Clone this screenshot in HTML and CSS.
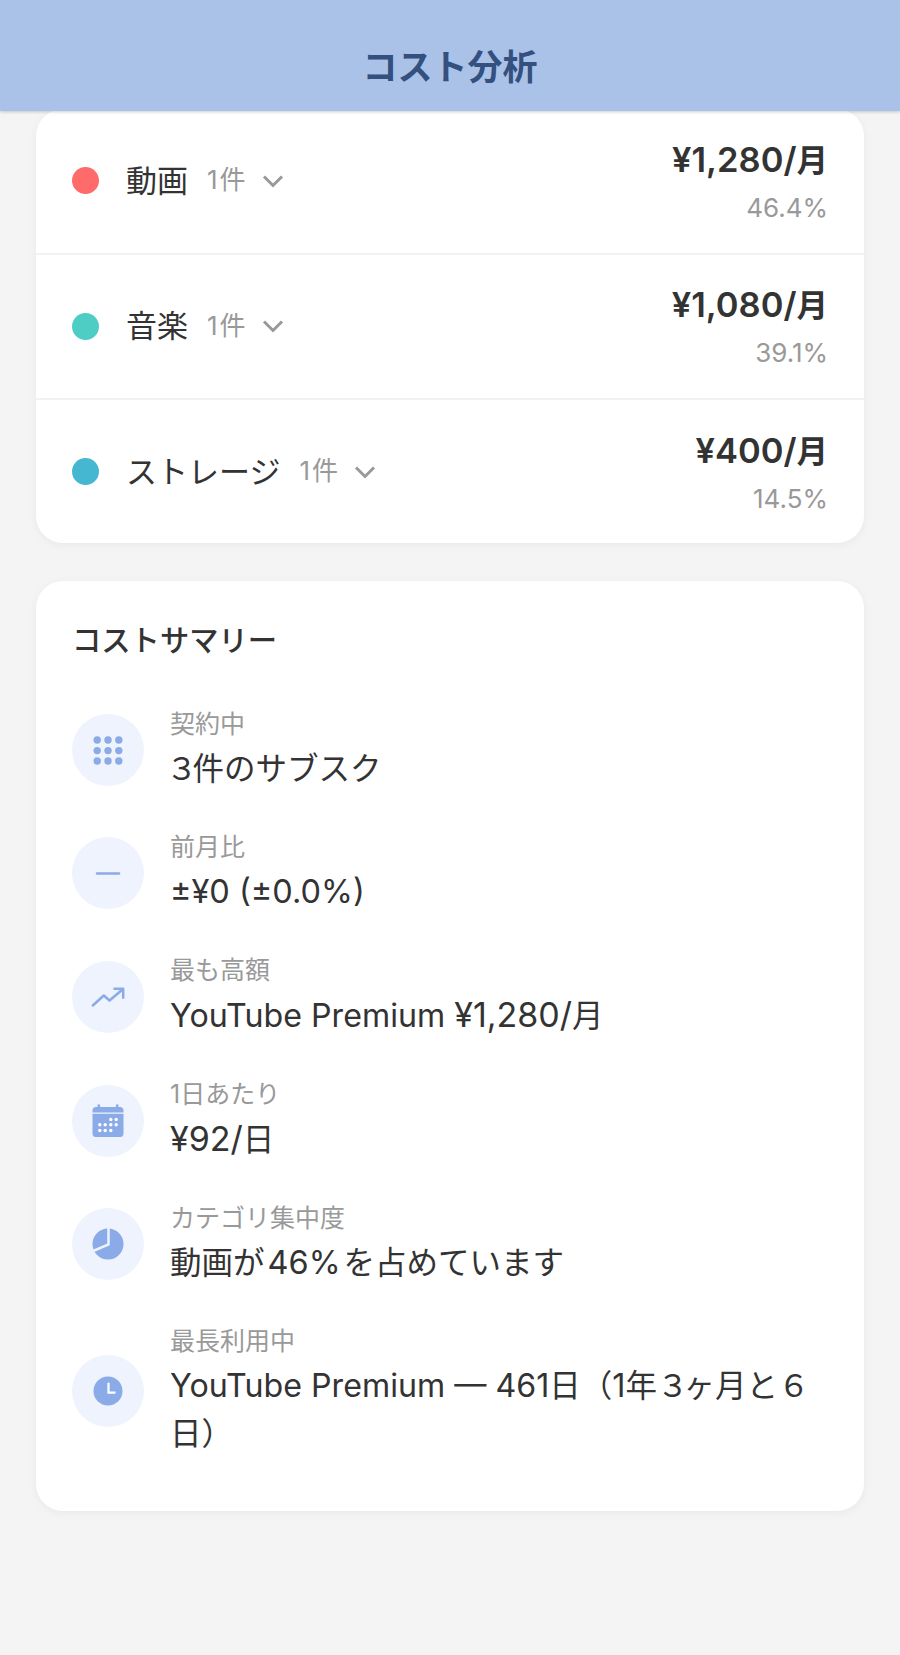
FILE: index.html
```html
<!DOCTYPE html>
<html lang="ja">
<head>
    <meta charset="UTF-8">
    <meta name="viewport" content="width=device-width, initial-scale=1.0">
    <title>コスト分析</title>
    <link rel="stylesheet" href="styles.css">
</head>
<body>
    <header class="app-header">
        <h1>コスト分析</h1>
    </header>

    <main class="content">
        <section class="card category-card">
            <div class="category-row">
                <span class="dot dot-video"></span>
                <span class="category-name">動画</span>
                <span class="category-count">1件</span>
                <svg class="chevron" viewBox="0 0 24 14"><path d="M3 2.5 12 11.5 21 2.5"/></svg>
                <div class="category-cost">
                    <div class="price"><span class="latin">¥1,280/</span>月</div>
                    <div class="percent">46.4%</div>
                </div>
            </div>
            <div class="category-row">
                <span class="dot dot-music"></span>
                <span class="category-name">音楽</span>
                <span class="category-count">1件</span>
                <svg class="chevron" viewBox="0 0 24 14"><path d="M3 2.5 12 11.5 21 2.5"/></svg>
                <div class="category-cost">
                    <div class="price"><span class="latin">¥1,080/</span>月</div>
                    <div class="percent">39.1%</div>
                </div>
            </div>
            <div class="category-row">
                <span class="dot dot-storage"></span>
                <span class="category-name">ストレージ</span>
                <span class="category-count">1件</span>
                <svg class="chevron" viewBox="0 0 24 14"><path d="M3 2.5 12 11.5 21 2.5"/></svg>
                <div class="category-cost">
                    <div class="price"><span class="latin">¥400/</span>月</div>
                    <div class="percent">14.5%</div>
                </div>
            </div>
        </section>

        <section class="card summary-card">
            <h2>コストサマリー</h2>

            <div class="summary-row">
                <div class="summary-icon">
                    <svg viewBox="0 0 36 36" class="icon-fill">
                        <circle cx="7.2" cy="8" r="3.7"/><circle cx="18" cy="8" r="3.7"/><circle cx="28.8" cy="8" r="3.7"/>
                        <circle cx="7.2" cy="18.6" r="3.7"/><circle cx="18" cy="18.6" r="3.7"/><circle cx="28.8" cy="18.6" r="3.7"/>
                        <circle cx="7.2" cy="29" r="3.7"/><circle cx="18" cy="29" r="3.7"/><circle cx="28.8" cy="29" r="3.7"/>
                    </svg>
                </div>
                <div class="summary-text">
                    <div class="summary-label">契約中</div>
                    <div class="summary-value"><span class="lead-digit">３</span>件のサブスク</div>
                </div>
            </div>

            <div class="summary-row">
                <div class="summary-icon">
                    <svg viewBox="0 0 36 36" class="icon-stroke"><path d="M7 18.5H29"/></svg>
                </div>
                <div class="summary-text">
                    <div class="summary-label">前月比</div>
                    <div class="summary-value"><span class="figure">±¥0 (±0.0%)</span></div>
                </div>
            </div>

            <div class="summary-row">
                <div class="summary-icon">
                    <svg viewBox="0 0 36 36" class="icon-stroke"><path d="M2.8 26.5 13.8 16.5 19.5 21.5 32.2 10.8"/><path d="M24.5 9.8H33.2V18.8"/></svg>
                </div>
                <div class="summary-text">
                    <div class="summary-label">最も高額</div>
                    <div class="summary-value"><span class="latin">YouTube Premium </span><span class="figure-wide">¥1,280/</span>月</div>
                </div>
            </div>

            <div class="summary-row">
                <div class="summary-icon">
                    <svg viewBox="0 0 36 36" class="icon-fill">
                        <path d="M7.5 4V2.5a1.2 1.2 0 0 1 2.6 0V4h15.8V2.5a1.2 1.2 0 0 1 2.6 0V4H30a3.5 3.5 0 0 1 3.5 3.5V9.6H2.5V7.5A3.5 3.5 0 0 1 6 4Z"/>
                        <path d="M2.5 10.8h31V30.5a3.5 3.5 0 0 1-3.5 3.5H6a3.5 3.5 0 0 1-3.5-3.5Z"/>
                        <g class="cal-dots">
                            <circle cx="20.8" cy="16.5" r="1.7"/><circle cx="26.2" cy="16.5" r="1.7"/>
                            <circle cx="9.8" cy="21.8" r="1.7"/><circle cx="15.2" cy="21.8" r="1.7"/><circle cx="20.8" cy="21.8" r="1.7"/><circle cx="26.2" cy="21.8" r="1.7"/>
                            <circle cx="9.8" cy="27.5" r="1.7"/><circle cx="15.2" cy="27.5" r="1.7"/><circle cx="20.8" cy="27.5" r="1.7"/>
                        </g>
                    </svg>
                </div>
                <div class="summary-text">
                    <div class="summary-label">1日あたり</div>
                    <div class="summary-value"><span class="figure-wide">¥92/</span>日</div>
                </div>
            </div>

            <div class="summary-row">
                <div class="summary-icon">
                    <svg viewBox="0 0 36 36" class="icon-fill">
                        <circle cx="18" cy="18" r="15.5"/>
                        <path class="pie-cut" d="M18.5 0V18.5L2 25.5"/>
                    </svg>
                </div>
                <div class="summary-text">
                    <div class="summary-label">カテゴリ集中度</div>
                    <div class="summary-value">動画が<span class="figure spaced">46%</span>を占めています</div>
                </div>
            </div>

            <div class="summary-row">
                <div class="summary-icon">
                    <svg viewBox="0 0 36 36" class="icon-fill">
                        <circle cx="18" cy="18" r="14.5"/>
                        <path class="clock-hands" d="M18.5 9.7V19.7H25.5"/>
                    </svg>
                </div>
                <div class="summary-text">
                    <div class="summary-label">最長利用中</div>
                    <div class="summary-value"><span class="latin">YouTube Premium — 461</span>日（<span class="figure">1</span>年<span class="digit-tight">３</span>ヶ月と６日）</div>
                </div>
            </div>
        </section>
    </main>
</body>
</html>
```

FILE: styles.css
```css
* {
    box-sizing: border-box;
}

body {
    margin: 0;
    min-height: 1655px;
    background: #f4f4f4;
    color: #333;
    font-family: "Inter", "Noto Sans CJK JP", sans-serif;
}

.app-header {
    position: relative;
    z-index: 2;
    height: 111px;
    display: flex;
    align-items: flex-end;
    justify-content: center;
    padding-bottom: 22px;
    background: #aac2e8;
    box-shadow: 0 1px 3px rgba(0, 0, 0, 0.2);
}

.app-header h1 {
    margin: 0;
    font-size: 35px;
    line-height: 44px;
    font-weight: 700;
    color: #34507f;
}

.content {
    margin-top: -2px;
    padding: 0 36px;
}

.card {
    background: #fff;
    border-radius: 27px;
    box-shadow: 0 2px 8px rgba(0, 0, 0, 0.05);
}

.category-card {
    margin-bottom: 37.5px;
}

.category-row {
    height: 145.5px;
    display: flex;
    align-items: center;
    padding: 0 36px;
    border-bottom: 2px solid #f2f2f2;
}

.category-row:last-child {
    height: 143px;
    border-bottom: none;
}

.dot {
    width: 27px;
    height: 27px;
    border-radius: 50%;
    margin-right: 27px;
    flex-shrink: 0;
}

.dot-video {
    background: #ff6b6b;
}

.dot-music {
    background: #4ecdc4;
}

.dot-storage {
    background: #45b7d1;
}

.category-name {
    font-size: 31px;
    line-height: 40px;
}

.category-count {
    margin-left: 19px;
    margin-bottom: 1px;
    font-size: 26px;
    line-height: 36px;
    letter-spacing: 2px;
    color: #999;
}

.chevron {
    width: 24px;
    height: 14px;
    margin-left: 13px;
    fill: none;
    stroke: #999;
    stroke-width: 3;
}

.category-cost {
    margin-left: auto;
    text-align: right;
}

.price {
    font-size: 31.5px;
    line-height: 42px;
    font-weight: 600;
}

.price .latin {
    font-size: 34.5px;
}

.percent {
    margin-top: 11px;
    font-size: 26px;
    line-height: 30px;
    color: #999;
}

.summary-card {
    padding: 38px 36px 16px;
    height: 930px;
}

.summary-card h2 {
    margin: 0 0 45.4px;
    font-size: 29.3px;
    line-height: 44px;
    font-weight: 500;
}

.summary-row {
    display: flex;
    align-items: center;
    gap: 26px;
    margin-top: 38px;
}

.summary-icon {
    width: 72px;
    height: 72px;
    flex-shrink: 0;
    display: flex;
    align-items: center;
    justify-content: center;
    border-radius: 50%;
    background: #eef3fd;
}

.summary-icon svg {
    width: 36px;
    height: 36px;
}

.icon-fill {
    fill: #8aaae8;
}

.icon-stroke {
    fill: none;
    stroke: #8aaae8;
    stroke-width: 2.5;
    stroke-linecap: round;
    stroke-linejoin: round;
}

.cal-dots {
    fill: #fff;
}

.pie-cut {
    fill: none;
    stroke: #eef3fd;
    stroke-width: 2.5;
}

.clock-hands {
    fill: none;
    stroke: #fff;
    stroke-width: 2.2;
}

.summary-label {
    margin-top: 1px;
    margin-bottom: 6px;
    font-size: 25px;
    line-height: 30px;
    color: #999;
}

.summary-value {
    font-size: 31.5px;
    line-height: 48px;
}

/* latin runs are set a bit apart from the kana size */
.summary-value .latin {
    font-size: 32.2px;
}

.summary-value .figure {
    font-size: 32.5px;
}

.summary-value .figure-wide {
    font-size: 34px;
}

.summary-value .spaced {
    margin: 0 3px;
}

.lead-digit {
    margin-left: -4px;
    letter-spacing: -5px;
}

.digit-tight {
    letter-spacing: -5px;
}
```
